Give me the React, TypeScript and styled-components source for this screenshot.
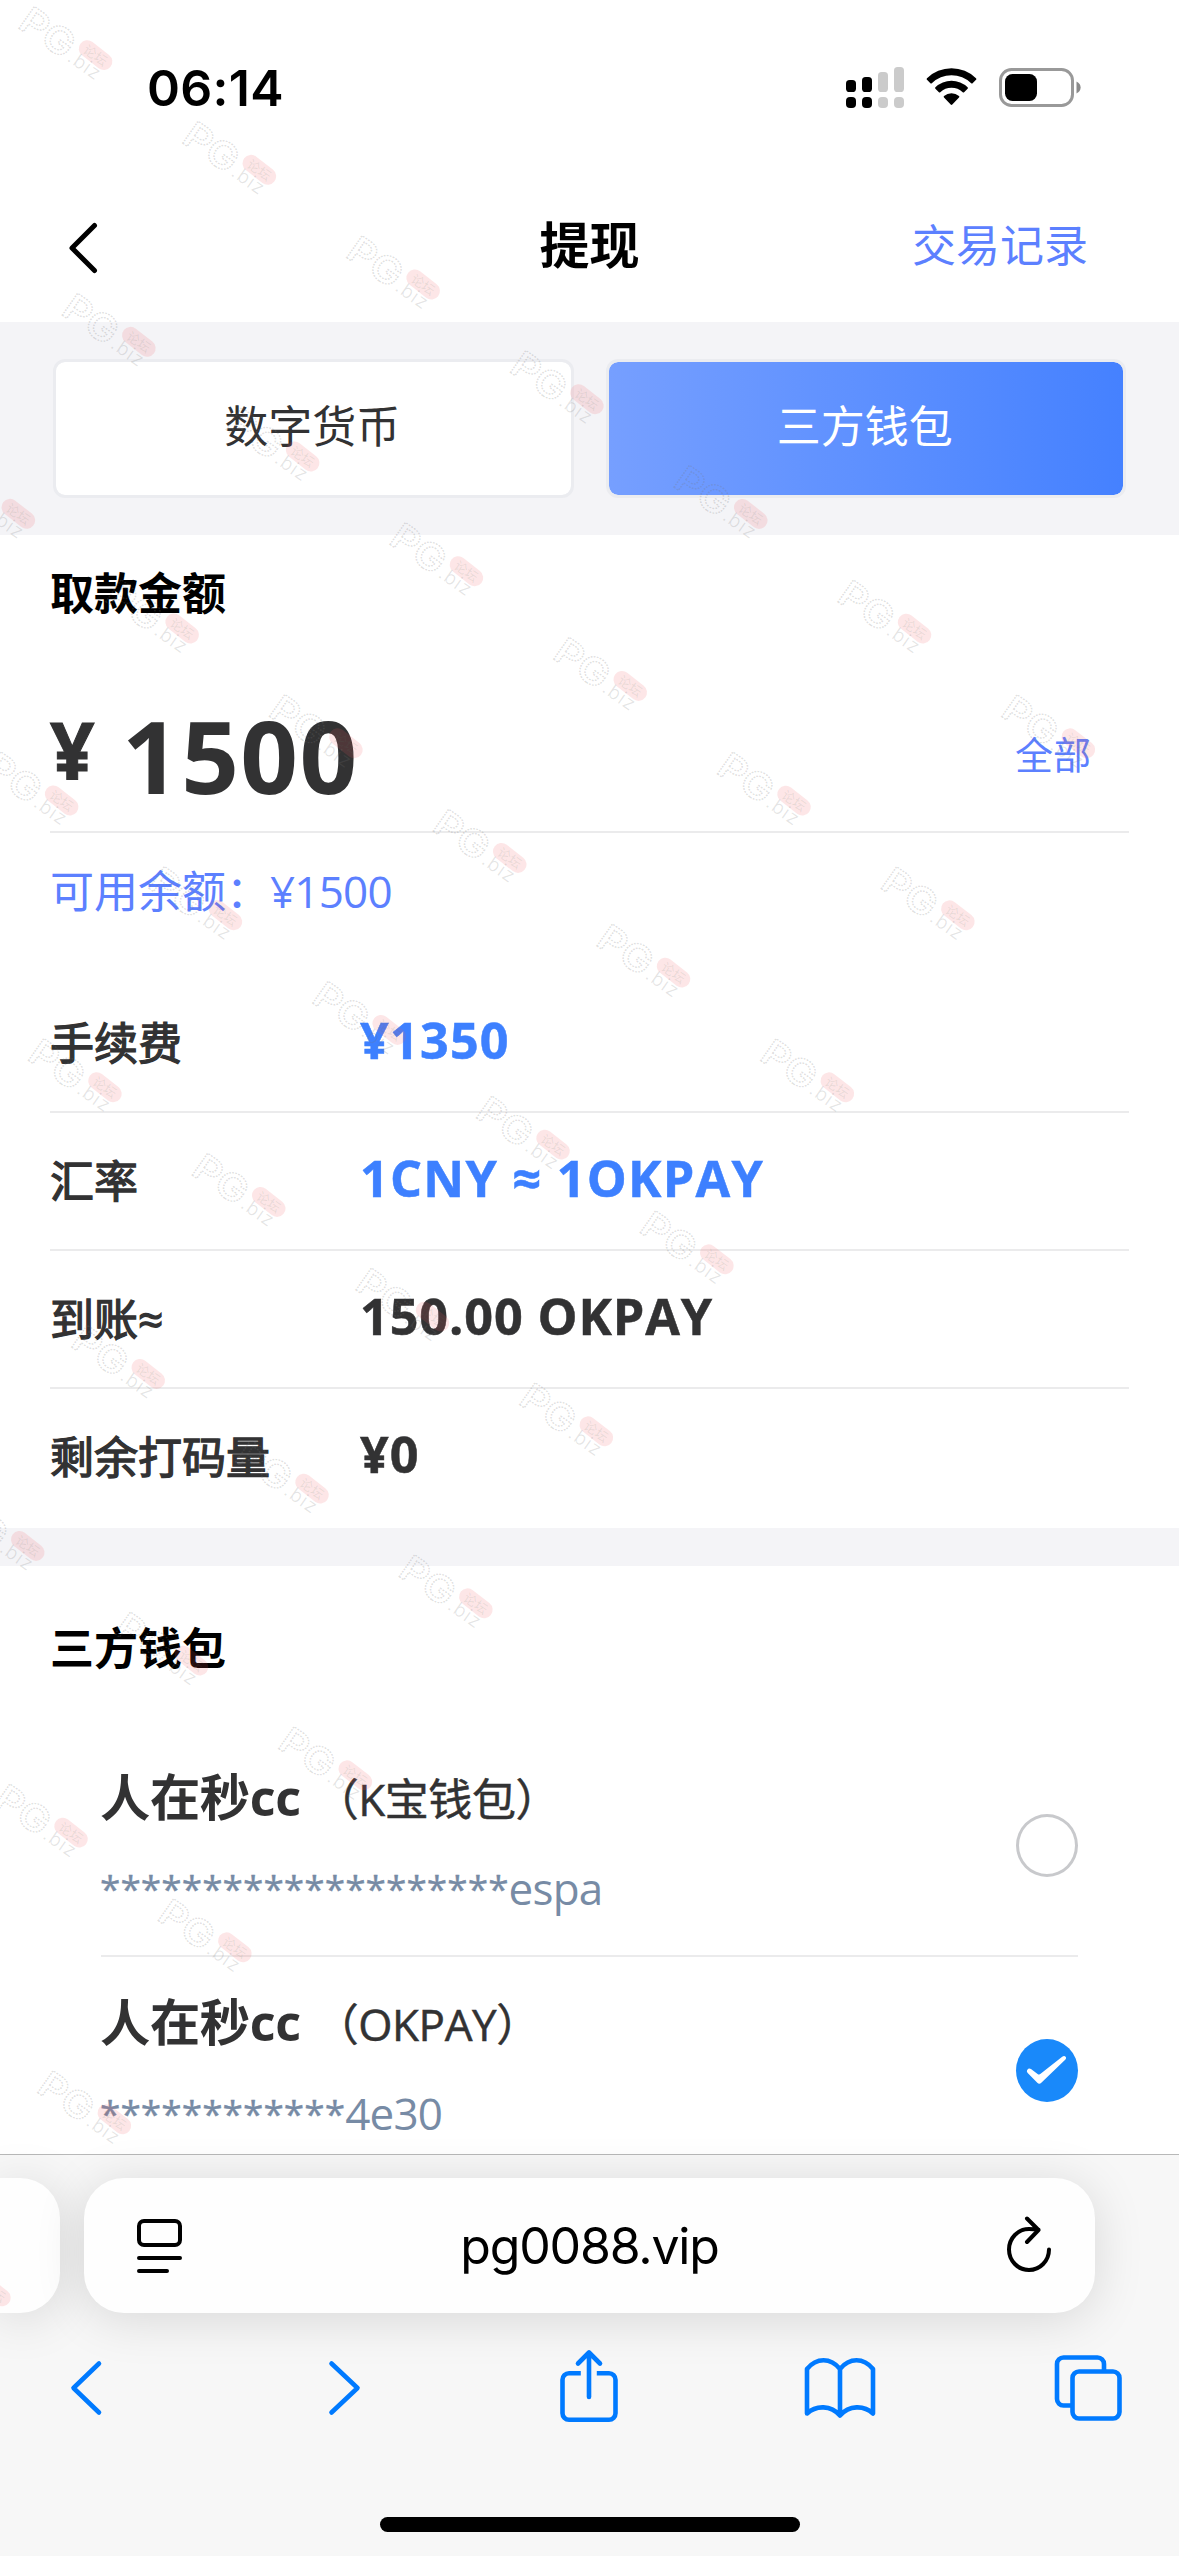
import React from "react";
import styled, { createGlobalStyle } from "styled-components";

const GlobalStyle = createGlobalStyle`
  * { box-sizing: border-box; }
  html, body { margin: 0; padding: 0; background: #fff; }
  body { overflow: hidden; -webkit-font-smoothing: antialiased; }
`;

const ui = `"Inter", "Noto Sans CJK SC", sans-serif`;
const text = `"Open Sans", "Noto Sans CJK SC", sans-serif`;

const Screen = styled.div`
  position: relative;
  width: 1179px;
  height: 2556px;
  display: flex;
  flex-direction: column;
  overflow: hidden;
  background: #fff;
  color: #323233;
  font-family: ${text};
`;

const Page = styled.main`
  height: 2154px;
  flex: none;
  overflow: hidden;
`;

const StatusBar = styled.div`
  height: 174px;
  display: flex;
  justify-content: space-between;
  align-items: center;
  padding: 0 98px 0 147px;
`;

const Clock = styled.span`
  font: 600 50px/60px ${ui};
  letter-spacing: 0.3px;
  padding-top: 2px;
  color: #000;
`;

const StatusIcons = styled.div`
  display: flex;
  align-items: center;
  gap: 22px;
  svg { display: block; }
`;

const NavBar = styled.header`
  height: 148px;
  display: grid;
  grid-template-columns: 1fr auto 1fr;
  align-items: center;
  padding: 0 91px 0 64px;
  svg { display: block; }
`;

const NavTitle = styled.h1`
  margin: 0 -27px 0 0;
  font: 700 50px/70px ${text};
  color: #000;
  padding-bottom: 7px;
`;

const NavLink = styled.a`
  justify-self: end;
  font-size: 44px;
  line-height: 60px;
  color: #5c80ff;
  padding-bottom: 7px;
`;

const Tabs = styled.div`
  height: 213px;
  display: grid;
  grid-template-columns: 1fr 1fr;
  gap: 32px;
  padding: 37px 53px;
  background: #f4f4f7;
`;

const Tab = styled.button<{ $active?: boolean }>`
  border: 3px solid #ebecf0;
  border-radius: 12px;
  background: ${(p) => (p.$active ? "linear-gradient(90deg, #769fff, #4581ff)" : "#fff")};
  background-clip: padding-box;
  color: ${(p) => (p.$active ? "#fff" : "#323233")};
  font: 400 44px/60px ${text};
  padding: 0 2px 6px 0;
`;

const Form = styled.section`
  height: 993px;
  padding: 0 50px;
`;

const SectionTitle = styled.h2<{ $height: number }>`
  margin: 0;
  height: ${(p) => p.$height}px;
  display: flex;
  align-items: center;
  padding-bottom: 2px;
  font: 700 44px/60px ${text};
  color: #000;
`;

const AmountRow = styled.div`
  height: 181px;
  display: flex;
  align-items: center;
  padding: 27px 38px 0 0;
  border-bottom: 2px solid #ebebec;
  font-weight: 700;
`;

const Currency = styled.span`
  width: 72px;
  font-size: 78px;
  line-height: 90px;
  padding-bottom: 11px;
  -webkit-text-stroke: 1px #323233;
`;

const Amount = styled.span`
  flex: 1;
  font-size: 101px;
  line-height: 120px;
  letter-spacing: 1.4px;
`;

const AllLink = styled.a`
  font-size: 38px;
  font-weight: 400;
  line-height: 50px;
  padding-bottom: 3px;
  color: #5c80ff;
`;

const Balance = styled.p`
  margin: 0 0 26px;
  height: 116px;
  display: flex;
  align-items: center;
  font-size: 44px;
  line-height: 60px;
  color: #5c80ff;
`;

const BalanceValue = styled.span`
  letter-spacing: -0.8px;
`;

const InfoRow = styled.div`
  height: 138px;
  display: flex;
  align-items: center;
  border-bottom: 2px solid #ebebec;
  &:last-child { border-bottom-color: transparent; }
`;

const InfoLabel = styled.span`
  width: 310px;
  font-size: 44px;
  line-height: 60px;
  padding-bottom: 1px;
  -webkit-text-stroke: 1.3px #323233;
`;

const InfoValue = styled.span<{ $blue?: boolean; $track: number }>`
  font-size: 50.3px;
  font-weight: 700;
  line-height: 64px;
  padding-bottom: 6px;
  letter-spacing: ${(p) => p.$track}px;
  color: ${(p) => (p.$blue ? "#3d80ff" : "#323233")};
  -webkit-text-stroke: 0.5px currentColor;
`;

const Divider = styled.div`
  height: 38px;
  background: #f4f4f7;
`;

const Wallets = styled.section`
  padding: 0 50px;
`;

const WalletItem = styled.div`
  height: 225px;
  margin: 0 51px;
  display: flex;
  align-items: center;
  justify-content: space-between;
  border-bottom: 2px solid #ebebec;
`;

const WalletInfo = styled.div`
  display: flex;
  flex-direction: column;
  gap: 24px;
  margin-left: -1px;
  padding-bottom: 10px;
`;

const WalletName = styled.div`
  display: flex;
  align-items: center;
  font-size: 50.3px;
  font-weight: 700;
  line-height: 70px;
  letter-spacing: -0.4px;
`;

const WalletKind = styled.span`
  font-size: 44px;
  font-weight: 400;
  padding-top: 4px;
  margin-left: 14px;
  -webkit-text-stroke: 0.5px #323233;
`;

const Account = styled.div`
  height: 60px;
  display: flex;
  font-size: 44px;
  line-height: 60px;
  letter-spacing: -0.8px;
  color: #778ba5;
`;

const Mask = styled.span`
  font-size: 37px;
  letter-spacing: 0.05px;
  -webkit-text-stroke: 0.4px #778ba5;
`;

const Radio = styled.span<{ $on?: boolean }>`
  width: 62px;
  height: 63px;
  margin-top: 3px;
  border-radius: 50%;
  border: ${(p) => (p.$on ? "0" : "3px solid #c8c9cc")};
  background: ${(p) => (p.$on ? "#1989fa" : "#fff")};
  svg { display: block; }
`;

const BrowserBar = styled.footer`
  position: relative;
  height: 402px;
  flex: none;
  display: flex;
  flex-direction: column;
  border-top: 1px solid #b8b8b8;
  background: #f7f7f7;
`;

const AddressRow = styled.div`
  height: 135px;
  margin-top: 23px;
  display: flex;
  gap: 24px;
`;

const NeighborTab = styled.div`
  width: 60px;
  border-radius: 0 40px 40px 0;
  background: #fefefe;
  box-shadow: 0 6px 50px rgba(0, 0, 0, 0.13);
`;

const AddressBar = styled.div`
  width: 1011px;
  border-radius: 40px;
  background: #fefefe;
  box-shadow: 0 6px 50px rgba(0, 0, 0, 0.13);
  display: flex;
  align-items: center;
  justify-content: space-between;
  padding: 0 38px 0 48px;
  svg { display: block; }
`;

const Url = styled.span`
  font: 400 50px/60px ${ui};
  letter-spacing: -1.2px;
  margin-right: 10px;
  color: #000;
`;

const Toolbar = styled.nav`
  display: flex;
  justify-content: space-between;
  padding: 35px 51px 0 46px;
  svg { display: block; }
`;

const HomeIndicator = styled.div`
  width: 420px;
  height: 15px;
  margin: 89px auto 0;
  border-radius: 8px;
  background: #000;
`;

const WatermarkLayer = styled.svg`
  position: absolute;
  inset: 0;
  pointer-events: none;
`;

const BAR_TOPS = [13, 10, 5, 0];

const Signal = () => (
  <svg width="58" height="41" viewBox="0 0 58 41">
    {BAR_TOPS.map((top, i) => (
      <g key={i} fill={i < 2 ? "#000" : "#cbcbcb"}>
        <rect x={i * 16} y={top} width="10" height={25 - top} rx="3.6" />
        <rect x={i * 16} y="30" width="10" height="11" rx="4" />
      </g>
    ))}
  </svg>
);

const Wifi = () => (
  <svg width="51" height="38" viewBox="0 0 51 38">
    <path d="M1 10.2a35 35 0 0 1 49 0c.5.5.5 1 0 1.5l-3.4 3.5c-.4.4-1 .4-1.4 0a28.2 28.2 0 0 0-39.4 0c-.4.4-1 .4-1.4 0L1 11.7c-.5-.5-.5-1 0-1.5z" />
    <path d="M9.4 19.2a23.4 23.4 0 0 1 32.2 0c.5.5.5 1 0 1.5l-3.5 3.5c-.4.4-1 .4-1.4 0a16.5 16.5 0 0 0-22.4 0c-.4.4-1 .4-1.4 0l-3.5-3.5c-.5-.5-.5-1 0-1.5z" />
    <path d="M18 28a12 12 0 0 1 15 0c.5.5.5 1 0 1.5l-6.7 7c-.5.5-1.1.5-1.6 0l-6.7-7c-.5-.5-.5-1 0-1.5z" />
  </svg>
);

const Battery = () => (
  <svg width="82" height="39" viewBox="0 0 82 39">
    <rect x="1.5" y="1.5" width="72" height="36" rx="11" fill="none" stroke="#999" strokeWidth="3" />
    <rect x="6" y="6" width="32" height="27" rx="7.5" />
    <path d="M77.5 13.5c5.5 2.5 5.5 9.5 0 12z" fill="#8a8a8a" />
  </svg>
);

const NavBack = () => (
  <svg width="40" height="54" viewBox="0 0 40 54" fill="none" stroke="#000" strokeWidth="5" strokeLinecap="round" strokeLinejoin="round">
    <path d="M30.5 4.5 8 27l22.5 22.5" />
  </svg>
);

const Check = () => (
  <svg width="62" height="63" viewBox="0 0 62 63">
    <path fill="#fff" d="M11.4 30.8c.8-1.4 2.3-1.5 3.6-.7l6.6 4.8c1 .8 2 .8 3-.1l21.6-17.1c1.3-1 2.6-.9 3.4 0 .8 1 .6 2-.4 3.1L25.3 43.8c-1.2 1.2-2.8 1.2-4 0L11.7 34c-1.1-1.1-1-2.3-.3-3.2z" />
  </svg>
);

const Reader = () => (
  <svg width="56" height="60" viewBox="0 0 56 60" fill="none" stroke="#000" strokeWidth="4" strokeLinecap="round">
    <rect x="7" y="5" width="41" height="24" rx="5" />
    <path d="M7 42h41M7 55h28" />
  </svg>
);

const Reload = () => (
  <svg width="56" height="60" viewBox="0 0 56 60" fill="none" stroke="#000" strokeWidth="4" strokeLinecap="round" strokeLinejoin="round">
    <path d="M48 33.5a20 20.5 0 1 1-20-20.500c4 0 7 .4 9.500.8M26 2.500l11.500 11.500L26 26" />
  </svg>
);

const ToolIcon = ({ children }: { children: React.ReactNode }) => (
  <svg width="80" height="80" viewBox="0 0 80 80" fill="none" stroke="#007aff" strokeWidth="4.6" strokeLinecap="round" strokeLinejoin="round">
    {children}
  </svg>
);

/** Repeating forum mark: tiles on a 35° lattice, cut off along its lower right diagonal. */
const marks: Array<[number, number]> = [];
for (let row = 0; row <= 9; row++) {
  for (let col = -4; col <= 6 - row; col++) {
    const x = 16 + col * 163.8 + row * 43.3;
    const y = 27.5 + col * 114.7 + row * 286.7;
    if (x > -90 && y > 0) marks.push([x, y]);
  }
}

const Watermark = () => (
  <WatermarkLayer width="1179" height="2556" viewBox="0 0 1179 2556">
    {marks.map(([x, y], i) => (
      <g key={i} transform={`translate(${x} ${y}) rotate(35)`}>
        <text x="0" y="-1" fontFamily="Inter, sans-serif" fontSize="37" fontWeight="600" textLength="58" lengthAdjust="spacingAndGlyphs" fill="none" stroke="#777" strokeOpacity=".24" strokeWidth="1.4" strokeDasharray="1.6 1.2">PG</text>
        <rect x="62" y="-31.5" width="38" height="17" rx="8.5" fill="#f0555f" fillOpacity=".15" transform="rotate(3 81 -23)" />
        <text x="68" y="-18" fontFamily="Noto Sans CJK SC, sans-serif" fontSize="13" fill="#576" fillOpacity=".13">论坛</text>
        <text x="60" y="-2" fontFamily="Inter, sans-serif" fontSize="19" fontWeight="300" textLength="35" fill="#777" fillOpacity=".2">.biz</text>
      </g>
    ))}
  </WatermarkLayer>
);

const infoRows = [
  { label: "手续费", value: "¥1350", blue: true, track: 1.2 },
  { label: "汇率", value: "1CNY ≈ 1OKPAY", blue: true, track: 1.25 },
  { label: "到账≈", value: "150.00 OKPAY", blue: false, track: 0.9 },
  { label: "剩余打码量", value: "¥0", blue: false, track: 1 },
];

const wallets = [
  { name: "人在秒cc", kind: "（K宝钱包）", masked: 20, tail: "espa", on: false },
  { name: "人在秒cc", kind: "（OKPAY）", masked: 12, tail: "4e30", on: true },
];

export default function App() {
  return (
    <Screen>
      <GlobalStyle />
      <Page>
        <StatusBar>
          <Clock>06:14</Clock>
          <StatusIcons>
            <Signal />
            <Wifi />
            <Battery />
          </StatusIcons>
        </StatusBar>
        <NavBar>
          <NavBack />
          <NavTitle>提现</NavTitle>
          <NavLink>交易记录</NavLink>
        </NavBar>
        <Tabs>
          <Tab>数字货币</Tab>
          <Tab $active>三方钱包</Tab>
        </Tabs>
        <Form>
          <SectionTitle $height={117}>取款金额</SectionTitle>
          <AmountRow>
            <Currency>¥</Currency>
            <Amount>1500</Amount>
            <AllLink>全部</AllLink>
          </AmountRow>
          <Balance>
            可用余额：<BalanceValue>¥1500</BalanceValue>
          </Balance>
          {infoRows.map((r) => (
            <InfoRow key={r.label}>
              <InfoLabel>{r.label}</InfoLabel>
              <InfoValue $blue={r.blue} $track={r.track}>{r.value}</InfoValue>
            </InfoRow>
          ))}
        </Form>
        <Divider />
        <Wallets>
          <SectionTitle $height={166}>三方钱包</SectionTitle>
          {wallets.map((w) => (
            <WalletItem key={w.kind}>
              <WalletInfo>
                <WalletName>
                  {w.name}
                  <WalletKind>{w.kind}</WalletKind>
                </WalletName>
                <Account>
                  <Mask>{"*".repeat(w.masked)}</Mask>
                  {w.tail}
                </Account>
              </WalletInfo>
              <Radio $on={w.on}>{w.on && <Check />}</Radio>
            </WalletItem>
          ))}
        </Wallets>
      </Page>
      <BrowserBar>
        <AddressRow>
          <NeighborTab />
          <AddressBar>
            <Reader />
            <Url>pg0088.vip</Url>
            <Reload />
          </AddressBar>
        </AddressRow>
        <Toolbar>
          <ToolIcon><path d="M53 15.5 27.5 40 53 64.5" /></ToolIcon>
          <ToolIcon><path d="M34.5 15.5 60.5 40l-26 24.5" /></ToolIcon>
          <ToolIcon>
            <path strokeLinecap="butt" d="M33.8 25.3H22a6.5 6.5 0 0 0-6.5 6.5v33.5a6.5 6.5 0 0 0 6.5 6.5h40a6.5 6.5 0 0 0 6.5-6.5V31.8a6.5 6.5 0 0 0-6.5-6.5H49.8" />
            <path d="M42 49V5M31 15.5 42 4.5l11 11" />
          </ToolIcon>
          <ToolIcon>
            <path d="M42 67.5V21C37.500 15.500 32 12.300 25.500 12.300S13.500 15.500 9 21v44.500c9-8.500 24-8.500 33 2 9-10.500 24-10.500 33-2V21c-4.500-5.500-10-8.700-16.500-8.700S46.500 15.500 42 21" />
          </ToolIcon>
          <ToolIcon>
            <rect x="24.5" y="23.5" width="47" height="47" rx="6.5" />
            <path strokeLinecap="butt" d="M56 23.5V16a6.5 6.5 0 0 0-6.5-6.5h-34A6.5 6.5 0 0 0 9 16v35a6.5 6.5 0 0 0 6.5 6.5h9" />
          </ToolIcon>
        </Toolbar>
        <HomeIndicator />
      </BrowserBar>
      <Watermark />
    </Screen>
  );
}
